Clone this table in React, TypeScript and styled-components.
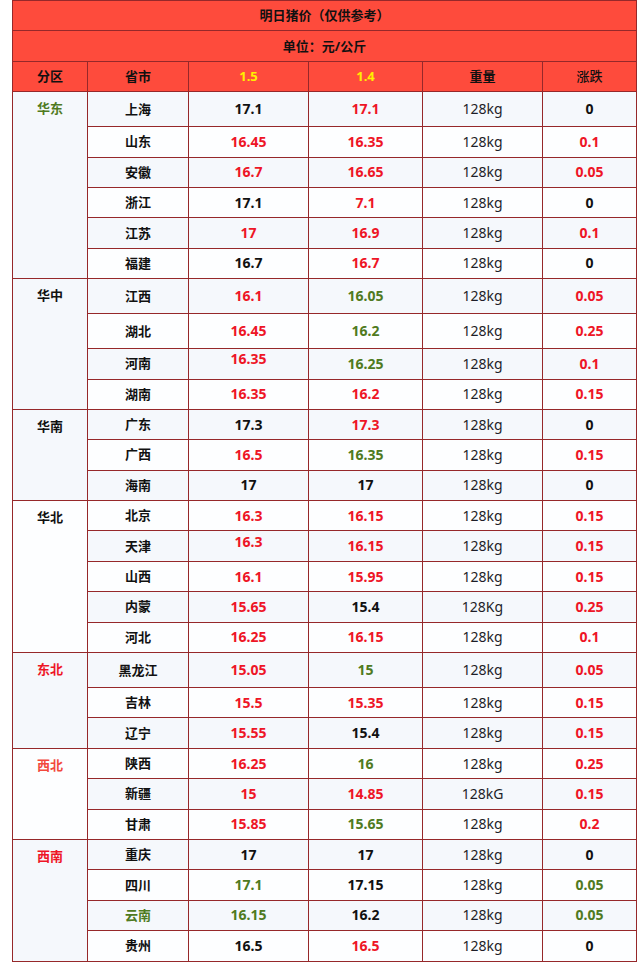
import styled, { createGlobalStyle } from "styled-components";

type Tone = "k" | "r" | "g" | "y" | "o";
type Val = [string, Tone];

interface Row {
  city: string;
  cityTone?: Tone;
  v15: Val;
  v14: Val;
  weight?: string;
  diff: Val;
  tall?: boolean;
  lift?: boolean;
}

interface Region {
  name: string;
  tone: Tone;
  rows: Row[];
}

const regions: Region[] = [
  {
    name: "华东",
    tone: "g",
    rows: [
      { city: "上海", v15: ["17.1", "k"], v14: ["17.1", "r"], diff: ["0", "k"], tall: true },
      { city: "山东", v15: ["16.45", "r"], v14: ["16.35", "r"], diff: ["0.1", "r"] },
      { city: "安徽", v15: ["16.7", "r"], v14: ["16.65", "r"], diff: ["0.05", "r"] },
      { city: "浙江", v15: ["17.1", "k"], v14: ["7.1", "r"], diff: ["0", "k"] },
      { city: "江苏", v15: ["17", "r"], v14: ["16.9", "r"], diff: ["0.1", "r"] },
      { city: "福建", v15: ["16.7", "k"], v14: ["16.7", "r"], diff: ["0", "k"] },
    ],
  },
  {
    name: "华中",
    tone: "k",
    rows: [
      { city: "江西", v15: ["16.1", "r"], v14: ["16.05", "g"], diff: ["0.05", "r"], tall: true },
      { city: "湖北", v15: ["16.45", "r"], v14: ["16.2", "g"], diff: ["0.25", "r"], tall: true },
      { city: "河南", v15: ["16.35", "r"], v14: ["16.25", "g"], diff: ["0.1", "r"], lift: true },
      { city: "湖南", v15: ["16.35", "r"], v14: ["16.2", "r"], diff: ["0.15", "r"] },
    ],
  },
  {
    name: "华南",
    tone: "k",
    rows: [
      { city: "广东", v15: ["17.3", "k"], v14: ["17.3", "r"], diff: ["0", "k"] },
      { city: "广西", v15: ["16.5", "r"], v14: ["16.35", "g"], diff: ["0.15", "r"] },
      { city: "海南", v15: ["17", "k"], v14: ["17", "k"], diff: ["0", "k"] },
    ],
  },
  {
    name: "华北",
    tone: "k",
    rows: [
      { city: "北京", v15: ["16.3", "r"], v14: ["16.15", "r"], diff: ["0.15", "r"] },
      { city: "天津", v15: ["16.3", "r"], v14: ["16.15", "r"], diff: ["0.15", "r"], lift: true },
      { city: "山西", v15: ["16.1", "r"], v14: ["15.95", "r"], diff: ["0.15", "r"] },
      { city: "内蒙", v15: ["15.65", "r"], v14: ["15.4", "k"], weight: "128Kg", diff: ["0.25", "r"] },
      { city: "河北", v15: ["16.25", "r"], v14: ["16.15", "r"], diff: ["0.1", "r"] },
    ],
  },
  {
    name: "东北",
    tone: "r",
    rows: [
      { city: "黑龙江", v15: ["15.05", "r"], v14: ["15", "g"], diff: ["0.05", "r"], tall: true },
      { city: "吉林", v15: ["15.5", "r"], v14: ["15.35", "r"], diff: ["0.15", "r"] },
      { city: "辽宁", v15: ["15.55", "r"], v14: ["15.4", "k"], diff: ["0.15", "r"] },
    ],
  },
  {
    name: "西北",
    tone: "o",
    rows: [
      { city: "陕西", v15: ["16.25", "r"], v14: ["16", "g"], diff: ["0.25", "r"] },
      { city: "新疆", v15: ["15", "r"], v14: ["14.85", "r"], weight: "128kG", diff: ["0.15", "r"] },
      { city: "甘肃", v15: ["15.85", "r"], v14: ["15.65", "g"], diff: ["0.2", "r"] },
    ],
  },
  {
    name: "西南",
    tone: "r",
    rows: [
      { city: "重庆", v15: ["17", "k"], v14: ["17", "k"], diff: ["0", "k"] },
      { city: "四川", v15: ["17.1", "g"], v14: ["17.15", "k"], diff: ["0.05", "g"] },
      { city: "云南", cityTone: "g", v15: ["16.15", "g"], v14: ["16.2", "k"], diff: ["0.05", "g"] },
      { city: "贵州", v15: ["16.5", "k"], v14: ["16.5", "r"], diff: ["0", "k"] },
    ],
  },
];

const tones: Record<Tone, string> = {
  k: "#111111",
  r: "#ee1526",
  g: "#4f7a21",
  y: "#ffee00",
  o: "#f2483c",
};

const GlobalStyle = createGlobalStyle`
  html, body {
    margin: 0;
    padding: 0;
    background: #ffffff;
  }
  body {
    font-family: "Noto Sans", "Noto Sans CJK SC", sans-serif;
  }
`;

const Page = styled.div`
  padding: 0 0 0 12px;
  width: 640px;
  box-sizing: border-box;
`;

const Table = styled.table`
  width: 624px;
  border-collapse: collapse;
  table-layout: fixed;
  border: 1px solid #96282a;
`;

const HeadRow = styled.tr`
  height: 30.4px;
  background: #fe4b3c;
`;

const HeadCell = styled.th<{ $tone?: Tone; $light?: boolean }>`
  border: 1px solid #96282a;
  padding: 0;
  text-align: center;
  vertical-align: middle;
  font-family: "Noto Sans", "Noto Sans CJK SC", sans-serif;
  font-size: 13px;
  font-weight: ${(p) => (p.$light ? 500 : 700)};
  color: ${(p) => tones[p.$tone ?? "k"]};
  line-height: 1;
`;

const BodyRow = styled.tr<{ $odd: boolean; $tall?: boolean }>`
  height: ${(p) => (p.$tall ? "35px" : "30.4px")};
  background: ${(p) => (p.$odd ? "#f5f8fc" : "#fdfeff")};
`;

const Cell = styled.td<{ $tone?: Tone; $cjk?: boolean; $plain?: boolean; $lift?: boolean }>`
  border: 1px solid #96282a;
  padding: ${(p) => (p.$lift ? "0 0 9px" : "0")};
  text-align: center;
  vertical-align: middle;
  font-family: "Noto Sans", "Noto Sans CJK SC", sans-serif;
  font-size: ${(p) => (p.$cjk ? "13px" : "14px")};
  font-weight: ${(p) => (p.$plain ? 400 : 700)};
  color: ${(p) => (p.$plain ? "#1e1e28" : tones[p.$tone ?? "k"])};
  line-height: 1;
`;

const RegionCell = styled.td<{ $tone: Tone }>`
  border: 1px solid #96282a;
  padding: 10px 0 0;
  text-align: center;
  vertical-align: top;
  font-family: "Noto Sans", "Noto Sans CJK SC", sans-serif;
  font-size: 13px;
  font-weight: 700;
  color: ${(p) => tones[p.$tone]};
  line-height: 1;
`;

const widths = [75, 101, 120, 114, 120, 94];

export default function App() {
  let index = 0;
  return (
    <Page>
      <GlobalStyle />
      <Table>
        <colgroup>
          {widths.map((w, i) => (
            <col key={i} style={{ width: w }} />
          ))}
        </colgroup>
        <thead>
          <HeadRow>
            <HeadCell colSpan={6}>明日猪价（仅供参考）</HeadCell>
          </HeadRow>
          <HeadRow>
            <HeadCell colSpan={6}>单位：元/公斤</HeadCell>
          </HeadRow>
          <HeadRow>
            <HeadCell>分区</HeadCell>
            <HeadCell>省市</HeadCell>
            <HeadCell $tone="y">1.5</HeadCell>
            <HeadCell $tone="y">1.4</HeadCell>
            <HeadCell>重量</HeadCell>
            <HeadCell $light>涨跌</HeadCell>
          </HeadRow>
        </thead>
        <tbody>
          {regions.map((region) =>
            region.rows.map((row, i) => {
              index += 1;
              return (
                <BodyRow key={row.city} $odd={index % 2 === 1} $tall={row.tall}>
                  {i === 0 && (
                    <RegionCell rowSpan={region.rows.length} $tone={region.tone}>
                      {region.name}
                    </RegionCell>
                  )}
                  <Cell $cjk $tone={row.cityTone}>{row.city}</Cell>
                  <Cell $tone={row.v15[1]} $lift={row.lift}>{row.v15[0]}</Cell>
                  <Cell $tone={row.v14[1]}>{row.v14[0]}</Cell>
                  <Cell $plain>{row.weight ?? "128kg"}</Cell>
                  <Cell $tone={row.diff[1]}>{row.diff[0]}</Cell>
                </BodyRow>
              );
            })
          )}
        </tbody>
      </Table>
    </Page>
  );
}
